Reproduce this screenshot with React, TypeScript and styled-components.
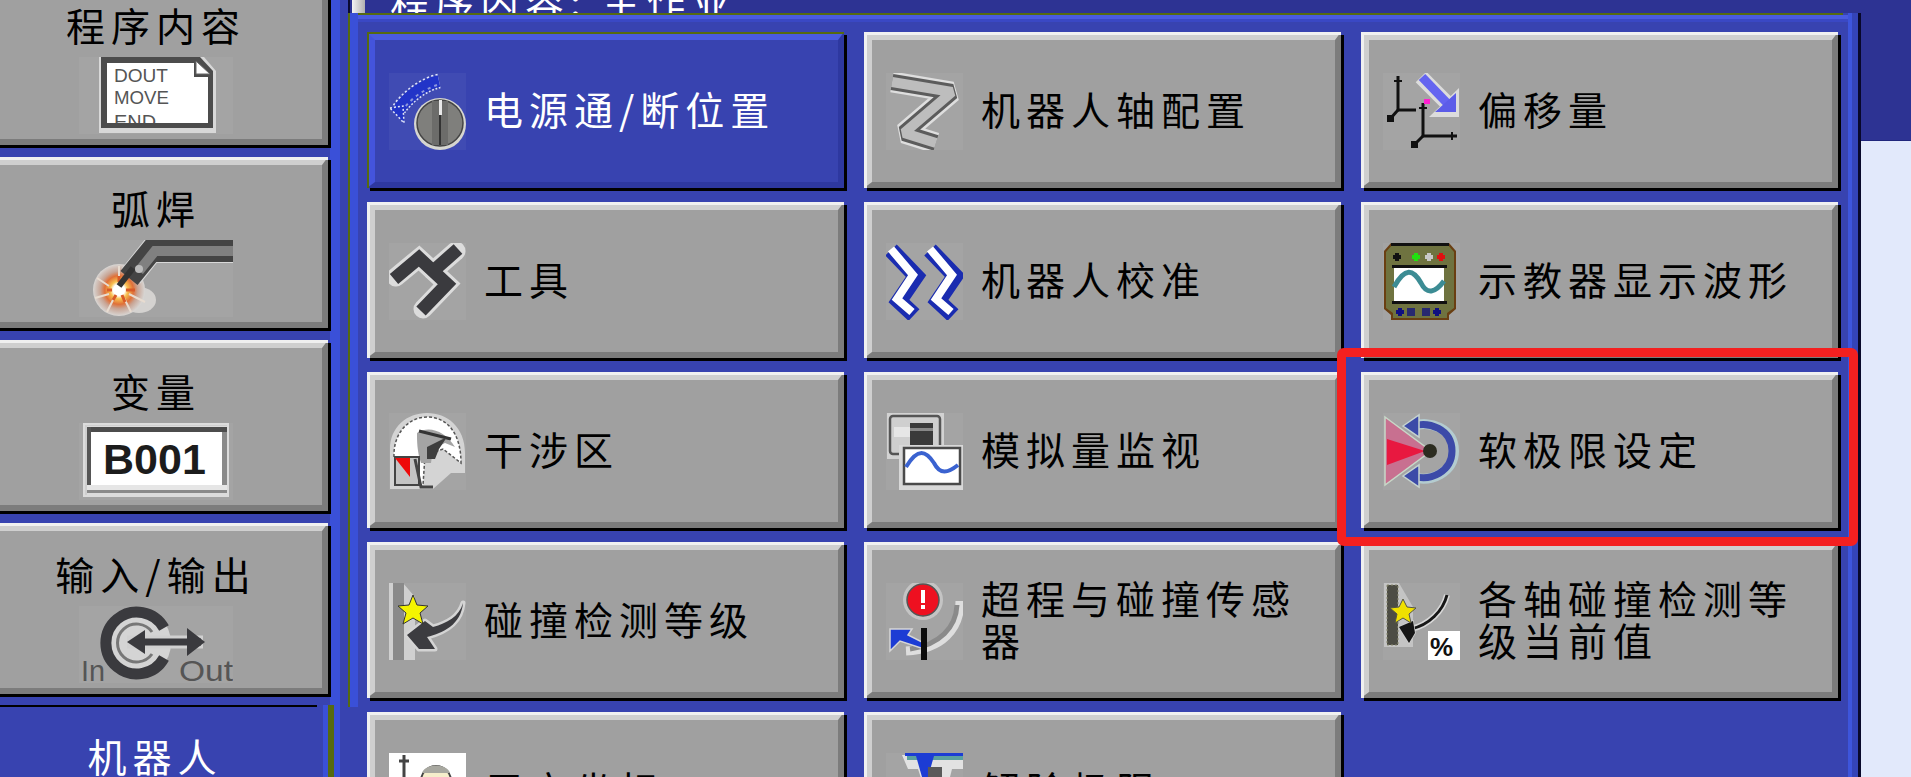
import React, { ReactNode } from "react";
import styled, { createGlobalStyle } from "styled-components";

const GlobalStyle = createGlobalStyle`
  html, body {
    margin: 0;
    padding: 0;
    width: 1911px;
    height: 777px;
    overflow: hidden;
    background: #e2e9fb;
  }
`;

const FONT = `"Noto Sans CJK SC", "Noto Sans", sans-serif`;
const DARK = "#3a3a3e";

// ---- left column icons (154 x 77)

const ProgramIcon = () => (
  <IconSvg $wide viewBox="0 0 154 77">
    <path d="M20 0H125L137 14V76H20Z" fill="#d8d8d8" />
    <path d="M22 0H121L134 14V71H22Z" fill="#4c4c4c" />
    <path d="M28 6H115V20H129V66H28Z" fill="#fff" />
    <path d="M117 4L131 17H117Z" fill="#fff" stroke="#666" strokeWidth="1" />
    <IconLabel x="35" y="25" fontSize="18" fill="#555" textLength="54" lengthAdjust="spacingAndGlyphs">DOUT</IconLabel>
    <IconLabel x="35" y="47" fontSize="18" fill="#555" textLength="55" lengthAdjust="spacingAndGlyphs">MOVE</IconLabel>
    <clipPath id="doc-clip">
      <rect x="28" y="6" width="101" height="60" />
    </clipPath>
    <g clipPath="url(#doc-clip)">
      <IconLabel x="35" y="71" fontSize="18" fill="#555" textLength="42" lengthAdjust="spacingAndGlyphs">END</IconLabel>
    </g>
  </IconSvg>
);

const WeldIcon = () => (
  <IconSvg $wide viewBox="0 0 154 77">
    <radialGradient id="spark" cx="0.5" cy="0.5" r="0.5">
      <stop offset="0.22" stopColor="#fff" />
      <stop offset="0.34" stopColor="#f8c050" />
      <stop offset="0.55" stopColor="#e07038" />
      <stop offset="0.72" stopColor="#c8a494" />
      <stop offset="1" stopColor="#d8d6d4" />
    </radialGradient>
    <ellipse cx="60" cy="60" rx="17" ry="13" fill="#d4d2d0" />
    <circle cx="40" cy="50" r="26" fill="url(#spark)" />
    <g stroke="#e8dcd0" strokeWidth="2">
      <path d="M40 26V40M18 38L30 46M16 58L30 54M28 72L35 58M52 72L45 58M66 62L50 54" />
    </g>
    <g stroke="#d85a28" strokeWidth="3">
      <path d="M40 36L40 42M28 50H33M47 50H56M34 60L37 55M46 62L43 55" />
    </g>
    <path d="M52 36L72 11H154" fill="none" stroke="#d8d8d8" strokeWidth="24" />
    <path d="M50 38L72 11H154" fill="none" stroke="#444" strokeWidth="22" />
    <path d="M60 31L76 11H154" fill="none" stroke="#808080" strokeWidth="10" />
    <path d="M40 46L54 28" stroke="#333" strokeWidth="6" />
    <circle cx="60" cy="29" r="4" fill="#bbb" />
  </IconSvg>
);

const VariableIcon = () => (
  <IconSvg $wide viewBox="0 0 154 77">
    <path d="M4 0H150V74H4Z" fill="#dcdcdc" />
    <path d="M6 2H148V3H8V72H6Z" fill="#cfcfcf" />
    <rect x="8" y="4" width="140" height="66" fill="#8a8a8a" />
    <rect x="12" y="9" width="131" height="53" fill="#fff" />
    <rect x="12" y="4" width="136" height="5" fill="#4c4c4c" />
    <rect x="8" y="4" width="4" height="62" fill="#555" />
    <rect x="8" y="62" width="140" height="5" fill="#e6e6e6" />
    <IconLabel x="24" y="51" fontSize="43" fontWeight="700" fill="#1c1c1c">B001</IconLabel>
  </IconSvg>
);

const InOutIcon = () => (
  <IconSvg $wide viewBox="0 0 154 77">
    <circle cx="57" cy="37" r="35" fill="#d4d4d4" />
    <path d="M85 22A31 31 0 1 0 85 52" fill="none" stroke={DARK} strokeWidth="11" />
    <path d="M73 26A19 19 0 1 0 73 48" fill="none" stroke="#777" strokeWidth="3" />
    <path d="M48 36H124" stroke="#d0d0d0" strokeWidth="13" />
    <path d="M54 36H122" stroke={DARK} strokeWidth="7" />
    <path d="M48 36L66 24V48Z" fill={DARK} />
    <path d="M126 36L108 22V50Z" fill={DARK} />
    <IconLabel x="2" y="75" fontSize="29" fill="#555" textLength="24" lengthAdjust="spacingAndGlyphs">In</IconLabel>
    <IconLabel x="100" y="75" fontSize="29" fill="#555" textLength="54" lengthAdjust="spacingAndGlyphs">Out</IconLabel>
  </IconSvg>
);

// ---- grid icons (77 x 77)

const PowerIcon = () => (
  <IconSvg viewBox="0 0 77 77">
    <g fill="none">
      <path d="M50 8C36 11 20 22 10 36" stroke="#dfe4f8" strokeWidth="15" strokeDasharray="2 2" />
      <path d="M50 8C36 11 20 22 10 36" stroke="#2234c8" strokeWidth="12" />
      <path d="M48 12C36 16 24 24 16 34" stroke="#8d98dc" strokeWidth="2" strokeDasharray="3 4" />
    </g>
    <path d="M1 35L14 33L15 50Z" fill="#2234c8" stroke="#dfe4f8" strokeWidth="1.5" strokeDasharray="2 2" />
    <circle cx="51" cy="51" r="26" fill="#d6d6d0" />
    <circle cx="51" cy="50" r="23" fill="#7f7f7c" stroke="#444" strokeWidth="1.5" />
    <rect x="43" y="28" width="16" height="44" fill="#6c6c6a" />
    <rect x="50" y="27" width="3" height="15" fill="#e8e8e8" />
    <rect x="50" y="42" width="2" height="30" fill="#333" />
  </IconSvg>
);

const ToolIcon = () => (
  <IconSvg viewBox="0 0 77 77">
    <g fill="none" stroke="#dcdcdc" strokeWidth="19" strokeLinecap="round">
      <path d="M7 34L30 15L58 41L34 66" />
      <path d="M44 28L67 8" />
    </g>
    <g fill="none" stroke={DARK} strokeWidth="13" strokeLinecap="butt">
      <path d="M5 36L30 15L58 41L32 68" />
      <path d="M42 30L69 6" />
    </g>
  </IconSvg>
);

const AxisIcon = () => (
  <IconSvg viewBox="0 0 77 77">
    <g fill="none" strokeLinejoin="bevel">
      <path d="M6 9L66 19L18 60L50 70" stroke="#dedede" strokeWidth="21" />
      <path d="M6 9L66 19L18 60L50 70" stroke="#5c5c5c" strokeWidth="16" />
      <path d="M6 9L66 19L18 60L50 70" stroke="#bdbdbd" strokeWidth="10" />
    </g>
  </IconSvg>
);

const CalibrateIcon = () => (
  <IconSvg viewBox="0 0 77 77">
    {[0, 39].map((dx) => (
      <g key={dx} transform={`translate(${dx} 0)`} fill="none">
        <path d="M5 7L30 33L13 58L28 72" stroke="#1a2cb0" strokeWidth="16" />
        <path d="M5 6L27 32L11 56L26 69" stroke="#fff" strokeWidth="8" />
      </g>
    ))}
  </IconSvg>
);

const OffsetIcon = () => (
  <IconSvg viewBox="0 0 77 77">
    <g fill="none" stroke="#111" strokeWidth="3">
      <path d="M15 3V37H33" />
      <path d="M15 37L7 46" />
      <path d="M40 30V63H74" />
      <path d="M40 63L32 71" />
      <path d="M11 8H19M36 35H44M69 59V67" strokeWidth="2" />
    </g>
    <rect x="4" y="42" width="7" height="7" fill="#111" />
    <rect x="28" y="68" width="7" height="7" fill="#111" />
    <path d="M38 4L66 32" stroke="#dcdcdc" strokeWidth="15" />
    <path d="M76 15V44H46Z" fill="#dcdcdc" />
    <path d="M39 4L64 30" stroke="#6464f0" strokeWidth="9" />
    <path d="M73 20V39H52Z" fill="#5c5ce8" />
    <rect x="41" y="26" width="6" height="5" fill="#ff20d0" />
  </IconSvg>
);

const Plus = ({ x, y, color }: { x: number; y: number; color: string }) => (
  <path d={`M${x - 4} ${y}H${x + 4}M${x} ${y - 4}V${y + 4}`} stroke={color} strokeWidth="4" />
);

const PendantIcon = () => (
  <IconSvg viewBox="0 0 77 77">
    <path d="M8 0H66L73 8V66L66 72V77H8V72L1 66V8Z" fill="#6a3f12" />
    <path d="M9 2H65L71 9V65L64 70V75H10V70L3 65V9Z" fill="#6f7340" />
    <path d="M8 0H66V3H8Z" fill="#111" />
    <Plus x={14} y={14} color="#111" />
    <Plus x={33} y={14} color="#22e010" />
    <Plus x={46} y={14} color="#c8c8c8" />
    <Plus x={58} y={14} color="#e01010" />
    <rect x="9" y="22" width="55" height="3" fill="#111" />
    <rect x="11" y="25" width="50" height="33" fill="#fff" />
    <rect x="9" y="58" width="55" height="3" fill="#111" />
    <path d="M11 44C22 24 30 26 38 40C44 52 52 50 61 38" fill="none" stroke="#3c8c94" strokeWidth="5" />
    <Plus x={17} y={69} color="#101080" />
    <rect x="24" y="65" width="8" height="8" fill="#101080" opacity="0.75" />
    <rect x="39" y="65" width="8" height="8" fill="#101080" opacity="0.75" />
    <Plus x={54} y={69} color="#101080" />
  </IconSvg>
);

const InterferenceIcon = () => (
  <IconSvg viewBox="0 0 77 77">
    <path d="M1 76V36C1 14 18 0 38 0C58 0 76 14 76 40V60H62L44 76Z" fill="#d4d4d4" />
    <path d="M5 44C4 20 20 4 38 4C58 4 72 20 72 50L54 36L36 42L34 72H20Z" fill="#fff" stroke="#555" strokeWidth="1.5" strokeDasharray="3 2" />
    <path d="M28 20C40 12 56 18 66 34L56 30L44 36L42 50H32C28 38 28 28 28 20Z" fill="#a4a4a4" />
    <path d="M30 18L62 26" stroke="#333" strokeWidth="3" />
    <path d="M38 34L58 24L50 36L46 46H38Z" fill="#3e3e3e" />
    <rect x="6" y="44" width="24" height="28" fill="#c4c4c4" stroke="#444" strokeWidth="2" />
    <path d="M6 45H21V64Z" fill="#ee0a0a" />
    <path d="M26 46L32 74H44" fill="none" stroke="#444" strokeWidth="3" />
  </IconSvg>
);

const MonitorIcon = () => (
  <IconSvg viewBox="0 0 77 77">
    <rect x="1" y="0" width="57" height="46" fill="#d2d2d2" />
    <rect x="4" y="3" width="50" height="38" rx="3" fill="#cfcfcf" stroke="#555" strokeWidth="2.5" />
    <rect x="8" y="14" width="16" height="10" fill="#e6e6e6" />
    <rect x="24" y="10" width="23" height="24" fill="#3a3a3a" />
    <rect x="24" y="15" width="23" height="3" fill="#888" />
    <rect x="13" y="32" width="64" height="45" fill="#d8d8d8" />
    <rect x="18" y="35" width="56" height="36" fill="#fff" stroke="#4a4a4a" strokeWidth="2.5" />
    <path d="M20 54C32 34 40 38 48 50C54 62 62 60 72 52" fill="none" stroke="#3a62d0" strokeWidth="4" />
  </IconSvg>
);

const SoftLimitIcon = () => (
  <IconSvg viewBox="0 0 77 77">
    <path d="M30 13C46 7 71 15 71 38C71 59 48 70 30 64" fill="none" stroke="#b4ccd0" strokeWidth="10" />
    <path d="M30 13C46 8 69 16 69 38C69 58 48 69 30 63" fill="none" stroke="#3c4aa8" strokeWidth="7" />
    <path d="M20 13L36 2V24Z" fill="#3c4aa8" stroke="#c6d4d0" strokeWidth="1.5" />
    <path d="M20 63L36 52V74Z" fill="#3c4aa8" stroke="#c6d4d0" strokeWidth="1.5" />
    <path d="M2 4L48 38L2 72Z" fill="#c87090" stroke="#c8d8c8" strokeWidth="1.5" />
    <path d="M4 26L42 38L4 52Z" fill="#e81840" />
    <circle cx="47" cy="38" r="7" fill="#2c2c20" />
  </IconSvg>
);

const CollisionIcon = () => (
  <IconSvg viewBox="0 0 77 77">
    <path d="M0 0H14L26 14V77H0Z" fill="#d0d0d0" />
    <rect x="4" y="0" width="11" height="77" fill="#8a8a8a" />
    <path
      d="M74 20C70 34 58 40 44 44L36 38L18 52L30 66L46 66L38 54C54 50 72 42 74 20Z"
      fill="#3c3c40"
      stroke="#d4d4d4"
      strokeWidth="5"
      strokeLinejoin="round"
      paintOrder="stroke"
    />
    <path d="M24 12L28 22L39 23L31 30L34 41L24 35L14 41L17 30L9 23L20 22Z" fill="#f4f400" stroke="#333" strokeWidth="1" />
  </IconSvg>
);

const OvertravelIcon = () => (
  <IconSvg viewBox="0 0 77 77">
    <path d="M74 18C74 46 56 66 20 68" fill="none" stroke="#dedede" strokeWidth="9" />
    <path d="M71 22C70 44 54 62 24 66" fill="none" stroke="#8a8a8a" strokeWidth="5" />
    <circle cx="37" cy="17" r="20" fill="#c4c4c4" />
    <circle cx="37" cy="17" r="16" fill="#ee1020" stroke="#555" strokeWidth="1.5" />
    <rect x="35" y="7" width="4" height="13" fill="#fff" />
    <rect x="35" y="22" width="4" height="4" fill="#fff" />
    <path d="M4 46H26L22 52L38 60V66L14 58L4 68Z" fill="#1c3cd4" stroke="#d6d6d6" strokeWidth="1.5" />
    <rect x="35" y="45" width="6" height="32" fill="#0c0c0c" />
  </IconSvg>
);

const AxisCollisionIcon = () => (
  <IconSvg viewBox="0 0 77 77">
    <path d="M1 0H16L30 24V64H1Z" fill="#c4c4c4" />
    <rect x="4" y="2" width="11" height="60" fill="#4c4c44" stroke="#8a8a70" strokeWidth="1" strokeDasharray="2 2" />
    <path d="M64 12C60 28 46 42 28 46" fill="none" stroke="#d8d8d8" strokeWidth="6" />
    <path d="M64 12C60 28 46 42 28 46" fill="none" stroke="#161616" strokeWidth="3" />
    <path d="M16 44L30 38L32 50L26 60Z" fill="#161616" stroke="#d0d0d0" strokeWidth="1.5" paintOrder="stroke" />
    <path d="M20 16L24 24L33 25L26 31L28 40L20 35L12 40L14 31L7 25L16 24Z" fill="#f0e000" stroke="#554" strokeWidth="1" />
    <rect x="45" y="48" width="32" height="29" fill="#fff" />
    <IconLabel x="47" y="73" fontSize="26" fontWeight="700" fill="#111">%</IconLabel>
  </IconSvg>
);

const UserFrameIcon = () => (
  <IconSvg viewBox="0 0 77 77">
    <rect x="0" y="0" width="77" height="77" fill="#fff" />
    <path d="M15 2V40M10 8H20" stroke="#444" strokeWidth="3" />
    <circle cx="47" cy="28" r="15" fill="#f6eecb" stroke="#444" strokeWidth="2" />
    <path d="M33 20C36 10 58 10 61 20" fill="#a8a8a0" />
    <rect x="39" y="25" width="4" height="5" fill="#444" />
    <rect x="51" y="25" width="4" height="5" fill="#444" />
  </IconSvg>
);

const ReleaseIcon = () => (
  <IconSvg viewBox="0 0 77 77">
    <path d="M16 2H77V16H66L60 40H40L32 16H22Z" fill="#e2e2e2" />
    <rect x="19" y="0" width="58" height="3" fill="#1c3cd4" />
    <rect x="21" y="3" width="56" height="4" fill="#5aa0a0" />
    <path d="M30 3H48L42 24V32H36V24Z" fill="#1c3cd4" />
    <rect x="42" y="14" width="14" height="26" fill="#5a5a5a" />
  </IconSvg>
);

// ---- page data

const SIDE_ITEMS: { label: string; icon: ReactNode }[] = [
  { label: "程序内容", icon: <ProgramIcon /> },
  { label: "弧焊", icon: <WeldIcon /> },
  { label: "变量", icon: <VariableIcon /> },
  { label: "输入/输出", icon: <InOutIcon /> },
];

const MENU_ITEMS: { label: string; icon: ReactNode; selected?: boolean; marked?: boolean }[] = [
  { label: "电源通/断位置", icon: <PowerIcon />, selected: true },
  { label: "机器人轴配置", icon: <AxisIcon /> },
  { label: "偏移量", icon: <OffsetIcon /> },
  { label: "工具", icon: <ToolIcon /> },
  { label: "机器人校准", icon: <CalibrateIcon /> },
  { label: "示教器显示波形", icon: <PendantIcon /> },
  { label: "干涉区", icon: <InterferenceIcon /> },
  { label: "模拟量监视", icon: <MonitorIcon /> },
  { label: "软极限设定", icon: <SoftLimitIcon />, marked: true },
  { label: "碰撞检测等级", icon: <CollisionIcon /> },
  { label: "超程与碰撞传感器", icon: <OvertravelIcon /> },
  { label: "各轴碰撞检测等级当前值", icon: <AxisCollisionIcon /> },
  { label: "用户坐标", icon: <UserFrameIcon /> },
  { label: "解除极限", icon: <ReleaseIcon /> },
];

export default function App() {
  return (
    <>
      <GlobalStyle />
      <Screen>
        <Sidebar>
          {SIDE_ITEMS.map((item) => (
            <SideButton key={item.label}>
              <Label>{item.label}</Label>
              {item.icon}
            </SideButton>
          ))}
          <SideTab>
            <TabLabel>机器人</TabLabel>
          </SideTab>
        </Sidebar>

        <Center>
          <TitleBar>
            <TitleMark />
            <TitleText>程序内容: 主作业</TitleText>
          </TitleBar>
          <Panel>
            <MenuGrid>
              {MENU_ITEMS.map((item) => (
                <MenuButton key={item.label} $selected={item.selected}>
                  {item.icon}
                  <MenuText $selected={item.selected}>{item.label}</MenuText>
                  {item.marked && <RedMark />}
                </MenuButton>
              ))}
            </MenuGrid>
          </Panel>
        </Center>

        <Gutter>
          <GutterTop />
        </Gutter>
      </Screen>
    </>
  );
}

const Screen = styled.div`
  display: flex;
  width: 1911px;
  height: 777px;
  overflow: hidden;
  background: #e2e9fb;
  font-family: ${FONT};
`;

const IconSvg = styled.svg<{ $wide?: boolean }>`
  flex: none;
  display: block;
  width: ${(p) => (p.$wide ? 154 : 77)}px;
  height: 77px;
  background: rgba(255, 255, 255, 0.045);
  overflow: hidden;
`;

const IconLabel = styled.text`
  font-family: "Liberation Sans", Arial, sans-serif;
`;

const Sidebar = styled.nav`
  flex: none;
  box-sizing: border-box;
  width: 370px;
  height: 803px;
  margin: -26px 0 0 -22px;
  padding-right: 20px;
  display: flex;
  flex-direction: column;
  gap: 12px;
  background: linear-gradient(
    to right,
    #3843b0 352px,
    #3a50d8 352px,
    #3a50d8 362px,
    #3843b0 362px
  );
`;

const SideButton = styled.div`
  position: relative;
  flex: none;
  box-sizing: border-box;
  height: 171px;
  padding: 21px 0 0 4px;
  display: flex;
  flex-direction: column;
  align-items: center;
  gap: 12px;
  background: #a0a0a0;
  border-style: solid;
  border-width: 8px 6px 6px 8px;
  border-color: #cfcfcf #7c7c7c #7c7c7c #cfcfcf;
  box-shadow: 3px 3px 0 #000;

  &::before {
    content: "";
    position: absolute;
    inset: -8px -6px -6px -8px;
    border-top: 3px solid #f0f0f0;
    border-left: 3px solid #f0f0f0;
    pointer-events: none;
  }
`;

const Label = styled.div`
  font-size: 39px;
  line-height: 42px;
  letter-spacing: 6px;
  color: #000;
  white-space: nowrap;
`;

const SideTab = styled.div`
  flex: none;
  box-sizing: border-box;
  height: 120px;
  margin-right: -20px;
  margin-top: -1px;
  padding: 29px 20px 0 4px;
  text-align: center;
  background:
    linear-gradient(#000, #000) 0 0 / 339px 2px no-repeat,
    linear-gradient(
      to right,
      #3843b0 345px,
      #3a50d8 345px,
      #3a50d8 350px,
      #566a10 350px,
      #566a10 356px,
      #3a50d8 356px,
      #3a50d8 362px,
      #3843b0 362px
    );
`;

const TabLabel = styled(Label)`
  color: #fff;
`;

const Center = styled.div`
  flex: none;
  width: 1513px;
  display: flex;
  flex-direction: column;
`;

const TitleBar = styled.header`
  flex: none;
  box-sizing: border-box;
  height: 13px;
  padding-left: 2px;
  display: flex;
  align-items: flex-end;
  background: #2d3393;
  border-left: 2px solid #0a0a30;
  overflow: hidden;
`;

const TitleMark = styled.div`
  flex: none;
  width: 13px;
  height: 13px;
  background: linear-gradient(to right, #f4f4f4, #b0b0b0);
`;

const TitleText = styled.div`
  flex: none;
  margin: 0 0 -8px 25px;
  font-size: 39px;
  line-height: 42px;
  letter-spacing: 6px;
  color: #fff;
  white-space: nowrap;
`;

const Panel = styled.main`
  flex: 1;
  box-sizing: border-box;
  padding: 19px 0 0 19px;
  border-right: 3px solid #08082a;
  background:
    linear-gradient(#566a10, #566a10) 0 0 / 2px 694px no-repeat,
    linear-gradient(#3a50d8, #3a50d8) 2px 0 / 8px 694px no-repeat,
    linear-gradient(#566a10, #566a10) 0 0 / calc(100% - 15px) 2px no-repeat,
    linear-gradient(#4a5be0, #4a5be0) 2px 2px / calc(100% - 12px) 4px no-repeat,
    linear-gradient(#3a48c4, #3a48c4) 2px 6px / calc(100% - 12px) 3px no-repeat,
    linear-gradient(#3444b8, #3444b8) 100% 0 / 6px 100% no-repeat,
    linear-gradient(#3d55dc, #3d55dc) calc(100% - 6px) 0 / 4px 100% no-repeat,
    #3843b0;
`;

const MenuGrid = styled.div`
  display: grid;
  grid-template-columns: repeat(3, 477px);
  grid-auto-rows: 156px;
  column-gap: 20px;
  row-gap: 14px;
`;

const MenuButton = styled.div<{ $selected?: boolean }>`
  position: relative;
  box-sizing: border-box;
  padding-left: 14px;
  display: flex;
  align-items: center;
  gap: 18px;
  background: ${(p) => (p.$selected ? "#3843b0" : "#a0a0a0")};
  border-style: solid;
  border-width: 8px 6px 6px 8px;
  border-color: ${(p) =>
    p.$selected
      ? "#4a5be0 #2e38a0 #2e38a0 #4454dc"
      : "#cfcfcf #7c7c7c #7c7c7c #cfcfcf"};
  box-shadow: 3px 3px 0 #000;

  &::before {
    content: "";
    position: absolute;
    inset: -8px -6px -6px -8px;
    border-top: ${(p) => (p.$selected ? "2px solid #566a10" : "3px solid #f0f0f0")};
    border-left: ${(p) => (p.$selected ? "2px solid #566a10" : "3px solid #f0f0f0")};
    pointer-events: none;
  }
`;

const MenuText = styled.div<{ $selected?: boolean }>`
  flex: 1;
  margin-top: -7px;
  font-size: 39px;
  line-height: 42px;
  letter-spacing: 6px;
  color: ${(p) => (p.$selected ? "#fff" : "#000")};
`;

const RedMark = styled.div`
  position: absolute;
  z-index: 2;
  top: -32px;
  left: -32px;
  right: -26px;
  bottom: -24px;
  box-sizing: border-box;
  border: 9px solid #f42020;
  border-radius: 7px;
  pointer-events: none;
`;

const Gutter = styled.aside`
  flex: none;
  width: 50px;
`;

const GutterTop = styled.div`
  height: 140px;
  background: #2d3393;
  border-bottom: 1px solid #20267c;
`;
